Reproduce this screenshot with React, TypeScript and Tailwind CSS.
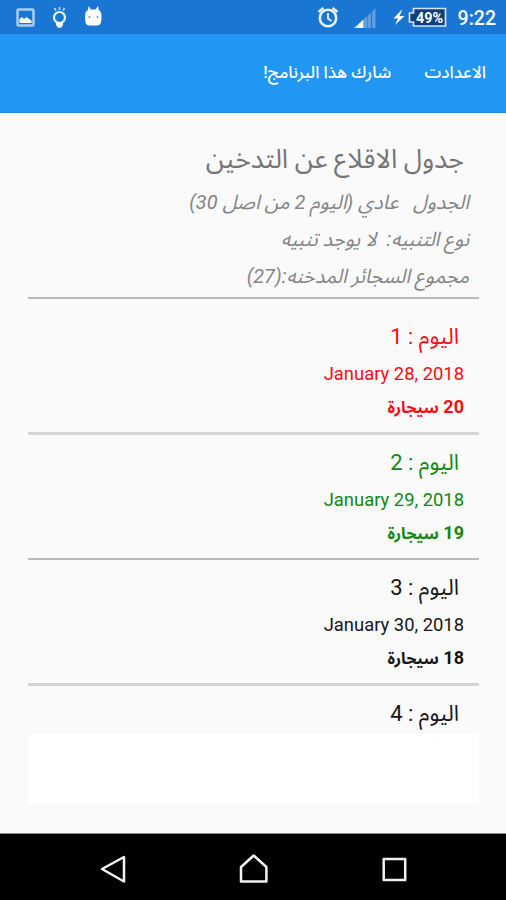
const days = [
    { day: 1, date: "January 28, 2018", count: 20, color: "text-[#f80d12]", line: "border-b-[3px] border-[#d7d7d7] h-[136px] pt-[21px]" },
    { day: 2, date: "January 29, 2018", count: 19, color: "text-[#12880f]", line: "border-b-2 border-[#bababa] h-[125px] pt-[11px]" },
    { day: 3, date: "January 30, 2018", count: 18, color: "text-[#161616]", line: "border-b-[3px] border-[#d3d3d3] h-[126px] pt-[11px]" },
];

const StatusBar = () => {
    return (
        <div dir="ltr" className="flex h-[34px] items-center justify-between bg-[#1976d2] text-white">
            <svg width="120" height="34" viewBox="0 0 120 34" fill="none">
                {/* picture */}
                <rect x="17.500" y="9.500" width="16" height="16" rx="1" stroke="#a9cdf2" strokeWidth="2.500" />
                <path d="M19.500 23v-4l2.500-2 2 2 2.500-2 2 1.500 3 2v2.500z" fill="#fff" />
                {/* bulb */}
                <circle cx="59.500" cy="17.500" r="5.500" stroke="#e2effc" strokeWidth="2.200" />
                <path d="M56 22.500h7v2.500l-2 2.800h-3l-2-2.800z" fill="#fff" />
                <path d="M59.500 7v3M54.500 8l1.500 2.700M64.500 8l-1.500 2.700" stroke="#c4dcf5" strokeWidth="1.600" />
                {/* robot head */}
                <path d="M88 10l.6-4 2.200 3.400h4.800L98 6l.8 4c2 1 2.700 3 2.700 6.500 0 6-1 8.900-4 8.900h-8.500c-3 0-4-3-4-8.900 0-3.500.9-5.500 3-6.500z" fill="#fff" />
                <circle cx="89.500" cy="17" r="1" fill="#5d9bdc" />
                <circle cx="97.500" cy="17" r="1" fill="#5d9bdc" />
            </svg>
            <div className="flex items-center pr-[10px]">
                <svg width="137" height="34" viewBox="312 0 137 34" fill="none">
                    {/* alarm */}
                    <circle cx="328" cy="18" r="8.200" stroke="#e8f2fd" strokeWidth="2.600" />
                    <path d="M328 13v5.500l3.500 2.500" stroke="#e8f2fd" strokeWidth="1.800" />
                    <path d="M318.500 12l5-4M337.500 12l-5-4" stroke="#e8f2fd" strokeWidth="2.600" />
                    {/* signal */}
                    <path d="M354 28l4-3.500V28z" fill="#d5e6f8" />
                    <path d="M358 28v-3.500l5.500-5V28z" fill="#fff" />
                    <path d="M364 28V19l3.500-3v12zM368 28V15.500l3-3V28zM372 28V11.500L375.500 8v20z" fill="#5f9ee0" />
                    {/* charging bolt */}
                    <path d="M402.500 9l-9 9.500h4.500l-3 6.500 9.500-9h-5z" fill="#fff" />
                    <path d="M413.500 8.500h32v17.500h-32v-4h-4v-9h4z" fill="#123f77" stroke="#cfe2f7" strokeWidth="1.700" />
                    <text x="429.500" y="22.800" textAnchor="middle" fill="#fff" className="font-['Roboto'] text-[15px] font-bold" textLength="27" lengthAdjust="spacingAndGlyphs">49%</text>
                </svg>
                <span className="w-[47px] pt-[3px] text-right font-['Roboto'] text-[19.500px] leading-[31px] font-medium">9:22</span>
            </div>
        </div>
    );
};

const NavBar = () => {
    return (
        <div className="h-[67px] border-t border-[#8a8a8a] bg-black">
            <svg width="506" height="66" viewBox="0 834 506 66" fill="none" stroke="#f2f2f2" strokeWidth="2.500" strokeLinejoin="round">
                <path d="M124 857v24.500L102 869z" />
                <path d="M241 881.500v-14.500l12.700-11.500 12.700 11.500v14.500z" />
                <rect x="383.700" y="859" width="21.500" height="21" />
            </svg>
        </div>
    );
};

export default function App() {
    return (
        <div dir="rtl" className="flex h-[900px] w-[506px] flex-col overflow-hidden bg-[#fafafa] font-['Roboto','Noto_Sans_Arabic','Noto_Sans','DejaVu_Sans',sans-serif] whitespace-nowrap">
            <StatusBar />
            <div className="flex h-[79px] items-center gap-[33px] border-b border-[#2089e3] bg-[#2196f3] pr-[20px] text-[16.900px] font-medium text-white">
                <span>الاعدادت</span>
                <span>شارك هذا البرنامج!</span>
            </div>

            <div className="flex grow flex-col pr-[27px] pl-[28px]">
                <div className="h-[186px] border-b-2 border-[#b9b9b9] pt-[26px] text-[#858585]">
                    <h1 className="pr-[15px] text-[26.600px] leading-[40px] text-[#757575]">جدول الاقلاع عن التدخين</h1>
                    <div className="pt-[5px] pr-[10px] text-[19.900px] leading-[37px] italic">
                        <p>الجدول &nbsp; عادي (اليوم 2 من اصل 30)</p>
                        <p>نوع التنبيه: &nbsp;لا يوجد تنبيه</p>
                        <p>مجموع السجائر المدخنه:(27)</p>
                    </div>
                </div>

                {days.map(({ day, date, count, color, line }) => (
                    <div key={day} className={`${line} ${color} shrink-0 pr-[15px]`}>
                        <p className="pr-[5px] text-[22px] leading-[34px]">اليوم : {day}</p>
                        <p dir="ltr" className="pt-px text-right text-[18.400px] leading-[38px]">{date}</p>
                        <p className="h-[28px] text-[18px] leading-[28px] font-bold">
                            {count} <span className="text-[16.200px]">سيجارة</span>
                        </p>
                    </div>
                ))}

                <p className="pt-[11px] pr-[20px] text-[22px] leading-[34px] text-[#161616]">اليوم : 4</p>
                <div className="mt-[3px] h-[70px] shrink-0 bg-white" />
            </div>
            <NavBar />
        </div>
    );
}
